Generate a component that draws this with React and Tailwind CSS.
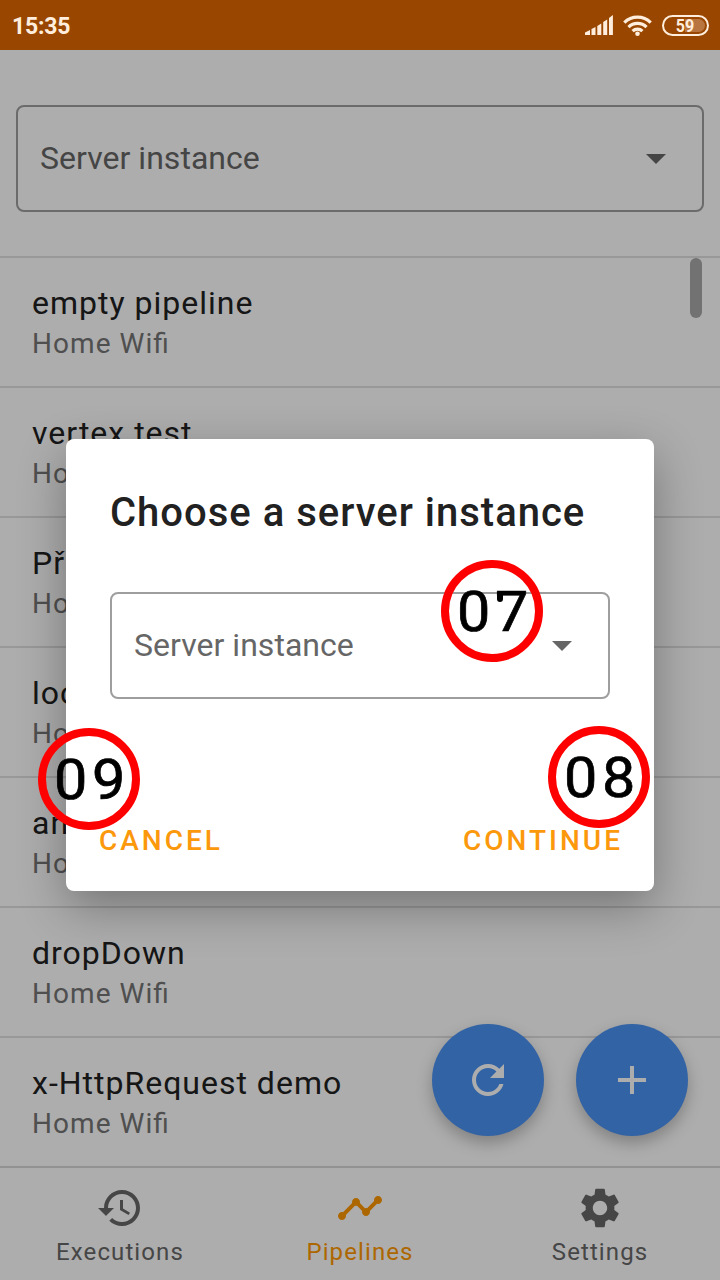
const rows = [
  "empty pipeline",
  "vertex test",
  "Příklad",
  "location",
  "android",
  "dropDown",
  "x-HttpRequest demo",
];

function Icon({ d, className }) {
  return (
    <svg viewBox="0 0 24 24" fill="currentColor" className={className}>
      <path d={d} />
    </svg>
  );
}

const paths = {
  refresh:
    "M17.65 6.35C16.2 4.9 14.21 4 12 4c-4.42 0-7.99 3.58-7.99 8s3.57 8 7.99 8c3.73 0 6.84-2.55 7.73-6h-2.08c-.82 2.33-3.04 4-5.65 4-3.31 0-6-2.69-6-6s2.69-6 6-6c1.66 0 3.14.69 4.22 1.78L13 11h7V4l-2.35 2.35z",
  add: "M19 13h-6v6h-2v-6H5v-2h6V5h2v6h6v2z",
  history:
    "M13 3c-4.97 0-9 4.03-9 9H1l3.89 3.89.07.14L9 12H6c0-3.87 3.13-7 7-7s7 3.13 7 7-3.13 7-7 7c-1.93 0-3.68-.79-4.94-2.06l-1.42 1.42C8.27 19.99 10.51 21 13 21c4.97 0 9-4.03 9-9s-4.03-9-9-9zm-1 5v5l4.28 2.54.72-1.21-3.5-2.08V8H12z",
  timeline:
    "M23 8c0 1.1-.9 2-2 2-.18 0-.35-.02-.51-.07l-3.56 3.55c.05.16.07.34.07.52 0 1.1-.9 2-2 2s-2-.9-2-2c0-.18.02-.36.07-.52l-2.55-2.55c-.16.05-.34.07-.52.07s-.36-.02-.52-.07l-4.55 4.56c.05.16.07.33.07.51 0 1.1-.9 2-2 2s-2-.9-2-2 .9-2 2-2c.18 0 .35.02.51.07l4.56-4.55C8.02 9.36 8 9.18 8 9c0-1.1.9-2 2-2s2 .9 2 2c0 .18-.02.36-.07.52l2.55 2.55c.16-.05.34-.07.52-.07s.36.02.52.07l3.55-3.56C19.02 8.35 19 8.18 19 8c0-1.1.9-2 2-2s2 .9 2 2z",
  settings:
    "M19.14 12.94c.04-.3.06-.61.06-.94 0-.32-.02-.64-.07-.94l2.03-1.58c.18-.14.23-.41.12-.61l-1.92-3.32c-.12-.22-.37-.29-.59-.22l-2.39.96c-.5-.38-1.03-.7-1.62-.94l-.36-2.54c-.04-.24-.24-.41-.48-.41h-3.84c-.24 0-.43.17-.47.41l-.36 2.54c-.59.24-1.13.57-1.62.94l-2.39-.96c-.22-.08-.47 0-.59.22L2.74 8.87c-.12.21-.08.47.12.61l2.03 1.58c-.05.3-.09.63-.09.94s.02.64.07.94l-2.03 1.58c-.18.14-.23.41-.12.61l1.92 3.32c.12.22.37.29.59.22l2.39-.96c.5.38 1.03.7 1.62.94l.36 2.54c.05.24.24.41.48.41h3.84c.24 0 .44-.17.47-.41l.36-2.54c.59-.24 1.13-.56 1.62-.94l2.39.96c.22.08.47 0 .59-.22l1.92-3.32c.12-.22.07-.47-.12-.61l-2.01-1.58zM12 15.6c-1.98 0-3.6-1.62-3.6-3.6s1.62-3.6 3.6-3.6 3.6 1.62 3.6 3.6-1.62 3.6-3.6 3.6z",
};

function StatusBar() {
  return (
    <header className="relative z-20 flex h-[50px] shrink-0 items-center bg-[#994700] pl-3 pr-[11px] text-[#ffeedd]">
      <span className="mt-[2px] flex-1 text-[23px] font-bold leading-none tracking-[-0.2px]">15:35</span>
      <svg className="mr-[10px] h-5 w-7" viewBox="0 0 28 20" fill="currentColor">
        <path d="M0 20v-2.5L5 15v5zM6.5 20v-6l4-2v8zM12.3 20v-9l4-2.4V20zM18.2 20V7l4-2.4V20zM24 20V3l3.9-3v20z" />
      </svg>
      <svg className="mr-[10px] h-[21px] w-[29px]" viewBox="0 0 29 21" fill="none" stroke="currentColor" strokeWidth="3.2">
        <path d="M1.3 7.6a18.6 18.6 0 0 1 26.4 0M5.5 12.1a12.8 12.8 0 0 1 18 0M9.6 16.2a7 7 0 0 1 9.8 0" />
        <circle cx="14.5" cy="18.7" r="2.3" fill="currentColor" stroke="none" />
      </svg>
      <div className="flex h-[21px] w-[47px] items-center justify-center rounded-full border-2 border-[#ffeedd] p-[2px]">
        <div className="flex h-[13px] w-full items-center justify-center rounded-full bg-gradient-to-r from-transparent from-50% to-[#b97540] to-50% pr-[1px] text-[19px] font-bold leading-none">
          <span className="scale-x-85">59</span>
        </div>
      </div>
    </header>
  );
}

function SelectField({ className }) {
  return (
    <div className={`flex h-[107px] items-center justify-between rounded-lg border-2 border-[#9e9e9e] pl-[22px] text-[32px] text-[#666666] ${className}`}>
      <span className="mb-[2px] tracking-[0.03px]">Server instance</span>
      <svg className="mt-[1px] h-[10px] w-5" viewBox="0 0 20 10" fill="currentColor">
        <path d="M0 0h20L10 10z" />
      </svg>
    </div>
  );
}

function NavItem({ icon, label, className }) {
  return (
    <div className={`flex flex-1 flex-col items-center pt-4 ${className}`}>
      <Icon d={paths[icon]} className="size-12" />
      <span className="mt-[5px] text-[24px] leading-[30px] tracking-[1.1px]">{label}</span>
    </div>
  );
}

function Marker({ label, className, children }) {
  return (
    <div className={`absolute flex size-[102px] items-center justify-center rounded-full border-[8px] border-[#ff0000] text-[56px] leading-none text-black ${className}`}>
      <span className="mt-[2px] scale-x-106 pl-[5px] tracking-[4.5px] [-webkit-text-stroke:0.7px_black]">{label}</span>
      {children}
    </div>
  );
}

export default function App() {
  return (
    <div className="relative flex h-[1280px] w-[720px] flex-col overflow-hidden bg-white font-['Roboto',sans-serif]">
      <StatusBar />
      <div className="h-[206px] shrink-0 px-4 pt-[55px]">
        <SelectField className="pr-9" />
      </div>
      <main className="relative flex-1 overflow-hidden">
        {rows.map((name) => (
          <div key={name} className="h-[130px] border-t-2 border-[#e0e0e0] px-8 pt-[26px]">
            <div className="text-[32px] leading-[38px] tracking-[1px] text-[#212121]">{name}</div>
            <div className="mt-[5px] text-[28px] leading-[33px] tracking-[1.05px] text-[#757575]">
              Home Wi<span className="tracking-normal">fi</span>
            </div>
          </div>
        ))}
        <div className="absolute right-[18px] top-[2px] h-[60px] w-3 rounded-full bg-[#a8a8a8]" />
        <div className="absolute bottom-[30px] right-8 flex gap-8">
          {["refresh", "add"].map((icon) => (
            <div key={icon} className="flex size-28 items-center justify-center rounded-full bg-[#4a92f3] text-white shadow-[0_7px_16px_rgba(0,0,0,0.26)]">
              <Icon d={paths[icon]} className="size-12" />
            </div>
          ))}
        </div>
      </main>
      <nav className="flex h-[114px] shrink-0 border-t-2 border-[#d8d8d8]">
        <NavItem icon="history" label="Executions" className="text-[#686868]" />
        <NavItem icon="timeline" label="Pipelines" className="text-[#ff9800]" />
        <NavItem icon="settings" label="Settings" className="text-[#686868]" />
      </nav>

      <div className="absolute inset-0 z-10 bg-black/32">
        <section className="absolute left-[66px] top-[439px] flex h-[452px] w-[588px] flex-col rounded-lg bg-white px-11 shadow-[0_16px_48px_rgba(0,0,0,0.32)]">
          <h1 className="mt-[50px] whitespace-nowrap text-[40px] font-medium leading-[48px] tracking-[1px] text-[#212121]">
            Choose a server instance
          </h1>
          <SelectField className="mt-[55px] pr-9" />
          <div className="-ml-[11px] -mr-[13px] mt-[125px] flex justify-between text-[28px] font-medium leading-[34px] tracking-[3px] text-[#fb980c]">
            <span>CANCEL</span>
            <span>CONTINUE</span>
          </div>
        </section>
        <Marker label="07" className="left-[441px] top-[560px]">
          <span className="absolute left-[48px] top-[24px] h-[10px] w-[6px] rounded-b-full bg-black" />
        </Marker>
        <Marker label="09" className="left-[38px] top-[728px]" />
        <Marker label="08" className="left-[548px] top-[726px]" />
      </div>
    </div>
  );
}
